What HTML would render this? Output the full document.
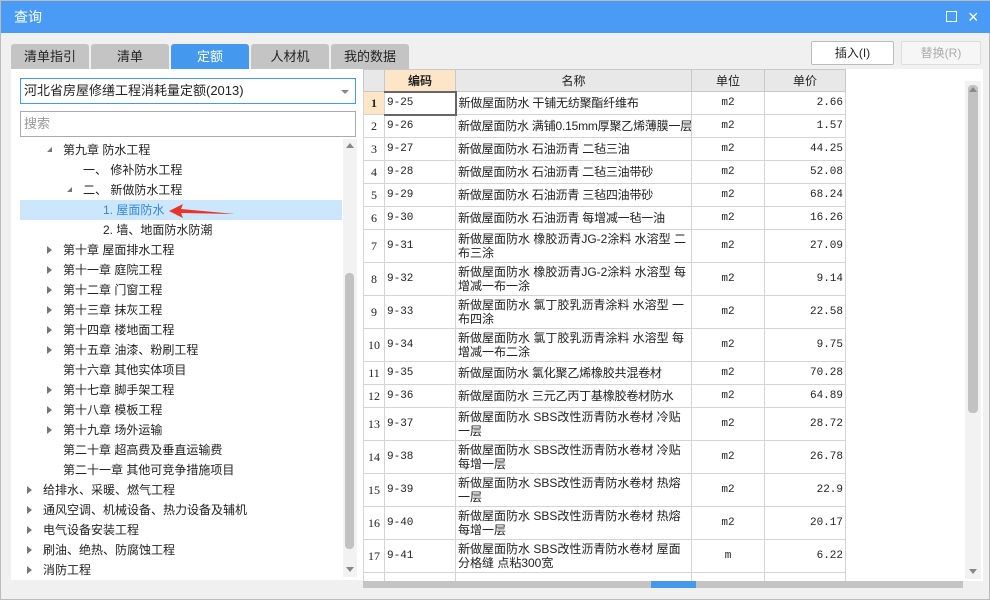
<!DOCTYPE html>
<html><head><meta charset="utf-8"><style>
*{margin:0;padding:0;box-sizing:border-box}
body{width:990px;height:600px;background:#f0f0f0;font-family:"Liberation Sans","Noto Sans CJK SC",sans-serif;font-size:12px;color:#222;position:relative;overflow:hidden;border:1px solid #bbb}
.abs{position:absolute}
.title{left:0;top:0;width:990px;height:32px;background:#4a9bf5;color:#fff;font-size:14px;line-height:32px;padding-left:13px}
.tab{top:43px;height:26px;width:78px;background:#c4c4c4;border-radius:3px 3px 0 0;text-align:center;line-height:26px;font-size:13px;color:#222}
.tab.on{background:#4499ee;color:#fff}
.tree div{position:absolute;height:20px;line-height:20px;font-size:12px;white-space:nowrap}
.tri{position:absolute;width:0;height:0;border-top:4px solid transparent;border-bottom:4px solid transparent;border-left:5px solid #777}
.dtri{position:absolute;width:0;height:0;border-left:5px solid transparent;border-bottom:5px solid #777}
table{border-collapse:collapse;table-layout:fixed;font-size:12px}
td{border:1px solid #d4d4d4;padding:0 2px;overflow:hidden}
th{border:1px solid #c8c8c8;background:#e8e8e8;font-weight:normal;font-size:12px;height:22px;padding:0}
.m{font-family:"Liberation Mono","Noto Sans CJK SC",monospace;font-size:11px}
.n{line-height:14px;white-space:nowrap;letter-spacing:-0.2px}
.n2{line-height:14px}
</style></head><body>
<div class="abs title">查询
<span class="abs" style="left:945px;top:10px;width:11px;height:11px;border:1.5px solid #fff"></span>
<span class="abs" style="left:967px;top:0;font-size:18px">×</span></div>
<div class="abs tab" style="left:10px">清单指引</div>
<div class="abs tab" style="left:90px">清单</div>
<div class="abs tab on" style="left:170px">定额</div>
<div class="abs tab" style="left:250px">人材机</div>
<div class="abs tab" style="left:330px">我的数据</div>
<div class="abs" style="left:810px;top:40px;width:83px;height:24px;background:#fff;border:1px solid #bbb;border-radius:2px;text-align:center;line-height:22px">插入(I)</div>
<div class="abs" style="left:900px;top:40px;width:80px;height:24px;background:#f6f6f6;border:1px solid #ddd;border-radius:2px;text-align:center;line-height:22px;color:#aaa">替换(R)</div>
<div class="abs" style="left:10px;top:68px;width:352px;height:511px;background:#fff"></div>
<div class="abs" style="left:19px;top:77px;width:336px;height:26px;border:1px solid #4499ee;line-height:24px;padding-left:3px;font-size:13px">河北省房屋修缮工程消耗量定额(2013)<span class="abs" style="right:6px;top:11px;border-left:4px solid transparent;border-right:4px solid transparent;border-top:4px solid #888"></span></div>
<div class="abs" style="left:19px;top:110px;width:336px;height:26px;border:1px solid #aaa;line-height:24px;padding-left:3px;font-size:13px;color:#999">搜索</div>
<div class="abs" style="left:19px;top:199px;width:322px;height:20px;background:#cce6fc"></div>
<div class="tree">
<span class="dtri" style="left:46px;top:146px"></span><div style="left:62px;top:139px">第九章 防水工程</div>
<div style="left:82px;top:159px">一、 修补防水工程</div>
<span class="dtri" style="left:66px;top:186px"></span><div style="left:82px;top:179px">二、 新做防水工程</div>
<div style="left:102px;top:199px;color:#3388dd">1. 屋面防水</div>
<div style="left:102px;top:219px">2. 墙、地面防水防潮</div>
<span class="tri" style="left:46px;top:245px"></span><div style="left:62px;top:239px">第十章 屋面排水工程</div>
<span class="tri" style="left:46px;top:265px"></span><div style="left:62px;top:259px">第十一章 庭院工程</div>
<span class="tri" style="left:46px;top:285px"></span><div style="left:62px;top:279px">第十二章 门窗工程</div>
<span class="tri" style="left:46px;top:305px"></span><div style="left:62px;top:299px">第十三章 抹灰工程</div>
<span class="tri" style="left:46px;top:325px"></span><div style="left:62px;top:319px">第十四章 楼地面工程</div>
<span class="tri" style="left:46px;top:345px"></span><div style="left:62px;top:339px">第十五章 油漆、粉刷工程</div>
<div style="left:62px;top:359px">第十六章 其他实体项目</div>
<span class="tri" style="left:46px;top:385px"></span><div style="left:62px;top:379px">第十七章 脚手架工程</div>
<span class="tri" style="left:46px;top:405px"></span><div style="left:62px;top:399px">第十八章 模板工程</div>
<span class="tri" style="left:46px;top:425px"></span><div style="left:62px;top:419px">第十九章 场外运输</div>
<div style="left:62px;top:439px">第二十章 超高费及垂直运输费</div>
<div style="left:62px;top:459px">第二十一章 其他可竞争措施项目</div>
<span class="tri" style="left:26px;top:485px"></span><div style="left:42px;top:479px">给排水、采暖、燃气工程</div>
<span class="tri" style="left:26px;top:505px"></span><div style="left:42px;top:499px">通风空调、机械设备、热力设备及辅机</div>
<span class="tri" style="left:26px;top:525px"></span><div style="left:42px;top:519px">电气设备安装工程</div>
<span class="tri" style="left:26px;top:545px"></span><div style="left:42px;top:539px">刷油、绝热、防腐蚀工程</div>
<span class="tri" style="left:26px;top:565px"></span><div style="left:42px;top:559px">消防工程</div>
</div>
<svg class="abs" style="left:160px;top:200px" width="80" height="20"><path d="M8 10 L22 3 L20 8 L74 13 L20 12 L22 17 Z" fill="#e8332a"/></svg>
<div class="abs" style="left:342px;top:138px;width:14px;height:438px;background:#f2f2f2"></div>
<div class="abs" style="left:344px;top:272px;width:9px;height:276px;background:#c2c2c2;border-radius:4px"></div>
<div class="abs" style="left:345px;top:142px;border-left:4px solid transparent;border-right:4px solid transparent;border-bottom:5px solid #888"></div>
<div class="abs" style="left:345px;top:566px;border-left:4px solid transparent;border-right:4px solid transparent;border-top:5px solid #888"></div>
<div class="abs" style="left:362px;top:68px;width:620px;height:512px;background:#fff;overflow:hidden">
<table class="abs" style="left:0;top:0;width:482px">
<colgroup><col style="width:21px"><col style="width:71px"><col style="width:236px"><col style="width:73px"><col style="width:81px"></colgroup>
<tr><th></th><th style="background:#fde6c8;font-weight:bold">编码</th><th>名称</th><th>单位</th><th>单价</th></tr>
<tbody id="b"></tbody>
</table>
</div>
<div class="abs" style="left:964px;top:80px;width:16px;height:498px;background:#f2f2f2"></div>
<div class="abs" style="left:967px;top:84px;width:10px;height:328px;background:#c2c2c2;border-radius:4px"></div>
<div class="abs" style="left:968px;top:86px;border-left:4px solid transparent;border-right:4px solid transparent;border-bottom:5px solid #888"></div>
<div class="abs" style="left:968px;top:568px;border-left:4px solid transparent;border-right:4px solid transparent;border-top:5px solid #888"></div>
<div class="abs" style="left:362px;top:580px;width:600px;height:7px;background:#c4c4c4"></div>
<div class="abs" style="left:650px;top:580px;width:45px;height:7px;background:#4499ee"></div>
<script>
var d=[["9-25","新做屋面防水 干铺无纺聚酯纤维布","m2","2.66",1],["9-26","新做屋面防水 满铺0.15mm厚聚乙烯薄膜一层","m2","1.57",1],["9-27","新做屋面防水 石油沥青 二毡三油","m2","44.25",1],["9-28","新做屋面防水 石油沥青 二毡三油带砂","m2","52.08",1],["9-29","新做屋面防水 石油沥青 三毡四油带砂","m2","68.24",1],["9-30","新做屋面防水 石油沥青 每增减一毡一油","m2","16.26",1],["9-31","新做屋面防水 橡胶沥青JG-2涂料 水溶型 二布三涂","m2","27.09",2],["9-32","新做屋面防水 橡胶沥青JG-2涂料 水溶型 每增减一布一涂","m2","9.14",2],["9-33","新做屋面防水 氯丁胶乳沥青涂料 水溶型 一布四涂","m2","22.58",2],["9-34","新做屋面防水 氯丁胶乳沥青涂料 水溶型 每增减一布二涂","m2","9.75",2],["9-35","新做屋面防水 氯化聚乙烯橡胶共混卷材","m2","70.28",1],["9-36","新做屋面防水 三元乙丙丁基橡胶卷材防水","m2","64.89",1],["9-37","新做屋面防水 SBS改性沥青防水卷材 冷贴一层","m2","28.72",2],["9-38","新做屋面防水 SBS改性沥青防水卷材 冷贴每增一层","m2","26.78",2],["9-39","新做屋面防水 SBS改性沥青防水卷材 热熔一层","m2","22.9",2],["9-40","新做屋面防水 SBS改性沥青防水卷材 热熔每增一层","m2","20.17",2],["9-41","新做屋面防水 SBS改性沥青防水卷材 屋面分格缝 点粘300宽","m","6.22",2],["","","","",1]];
var h="";d.forEach(function(r,i){var s=i==0;h+='<tr style="height:'+(r[4]==2?33:23)+'px"><td style="text-align:center;font-family:Liberation Serif;'+(s?'background:#fde6c8;font-weight:bold':'')+'">'+(i<17?i+1:'')+'</td><td class="m"'+(s?' style="border:2px solid #666;border-left:1px solid #4499ee"':'')+'>'+r[0]+'</td><td class="'+(r[4]==2?'n2':'n')+'">'+r[1]+'</td><td class="m" style="text-align:center">'+r[2]+'</td><td class="m" style="text-align:right">'+r[3]+'</td></tr>'});
document.getElementById("b").innerHTML=h;
</script>
</body></html>
